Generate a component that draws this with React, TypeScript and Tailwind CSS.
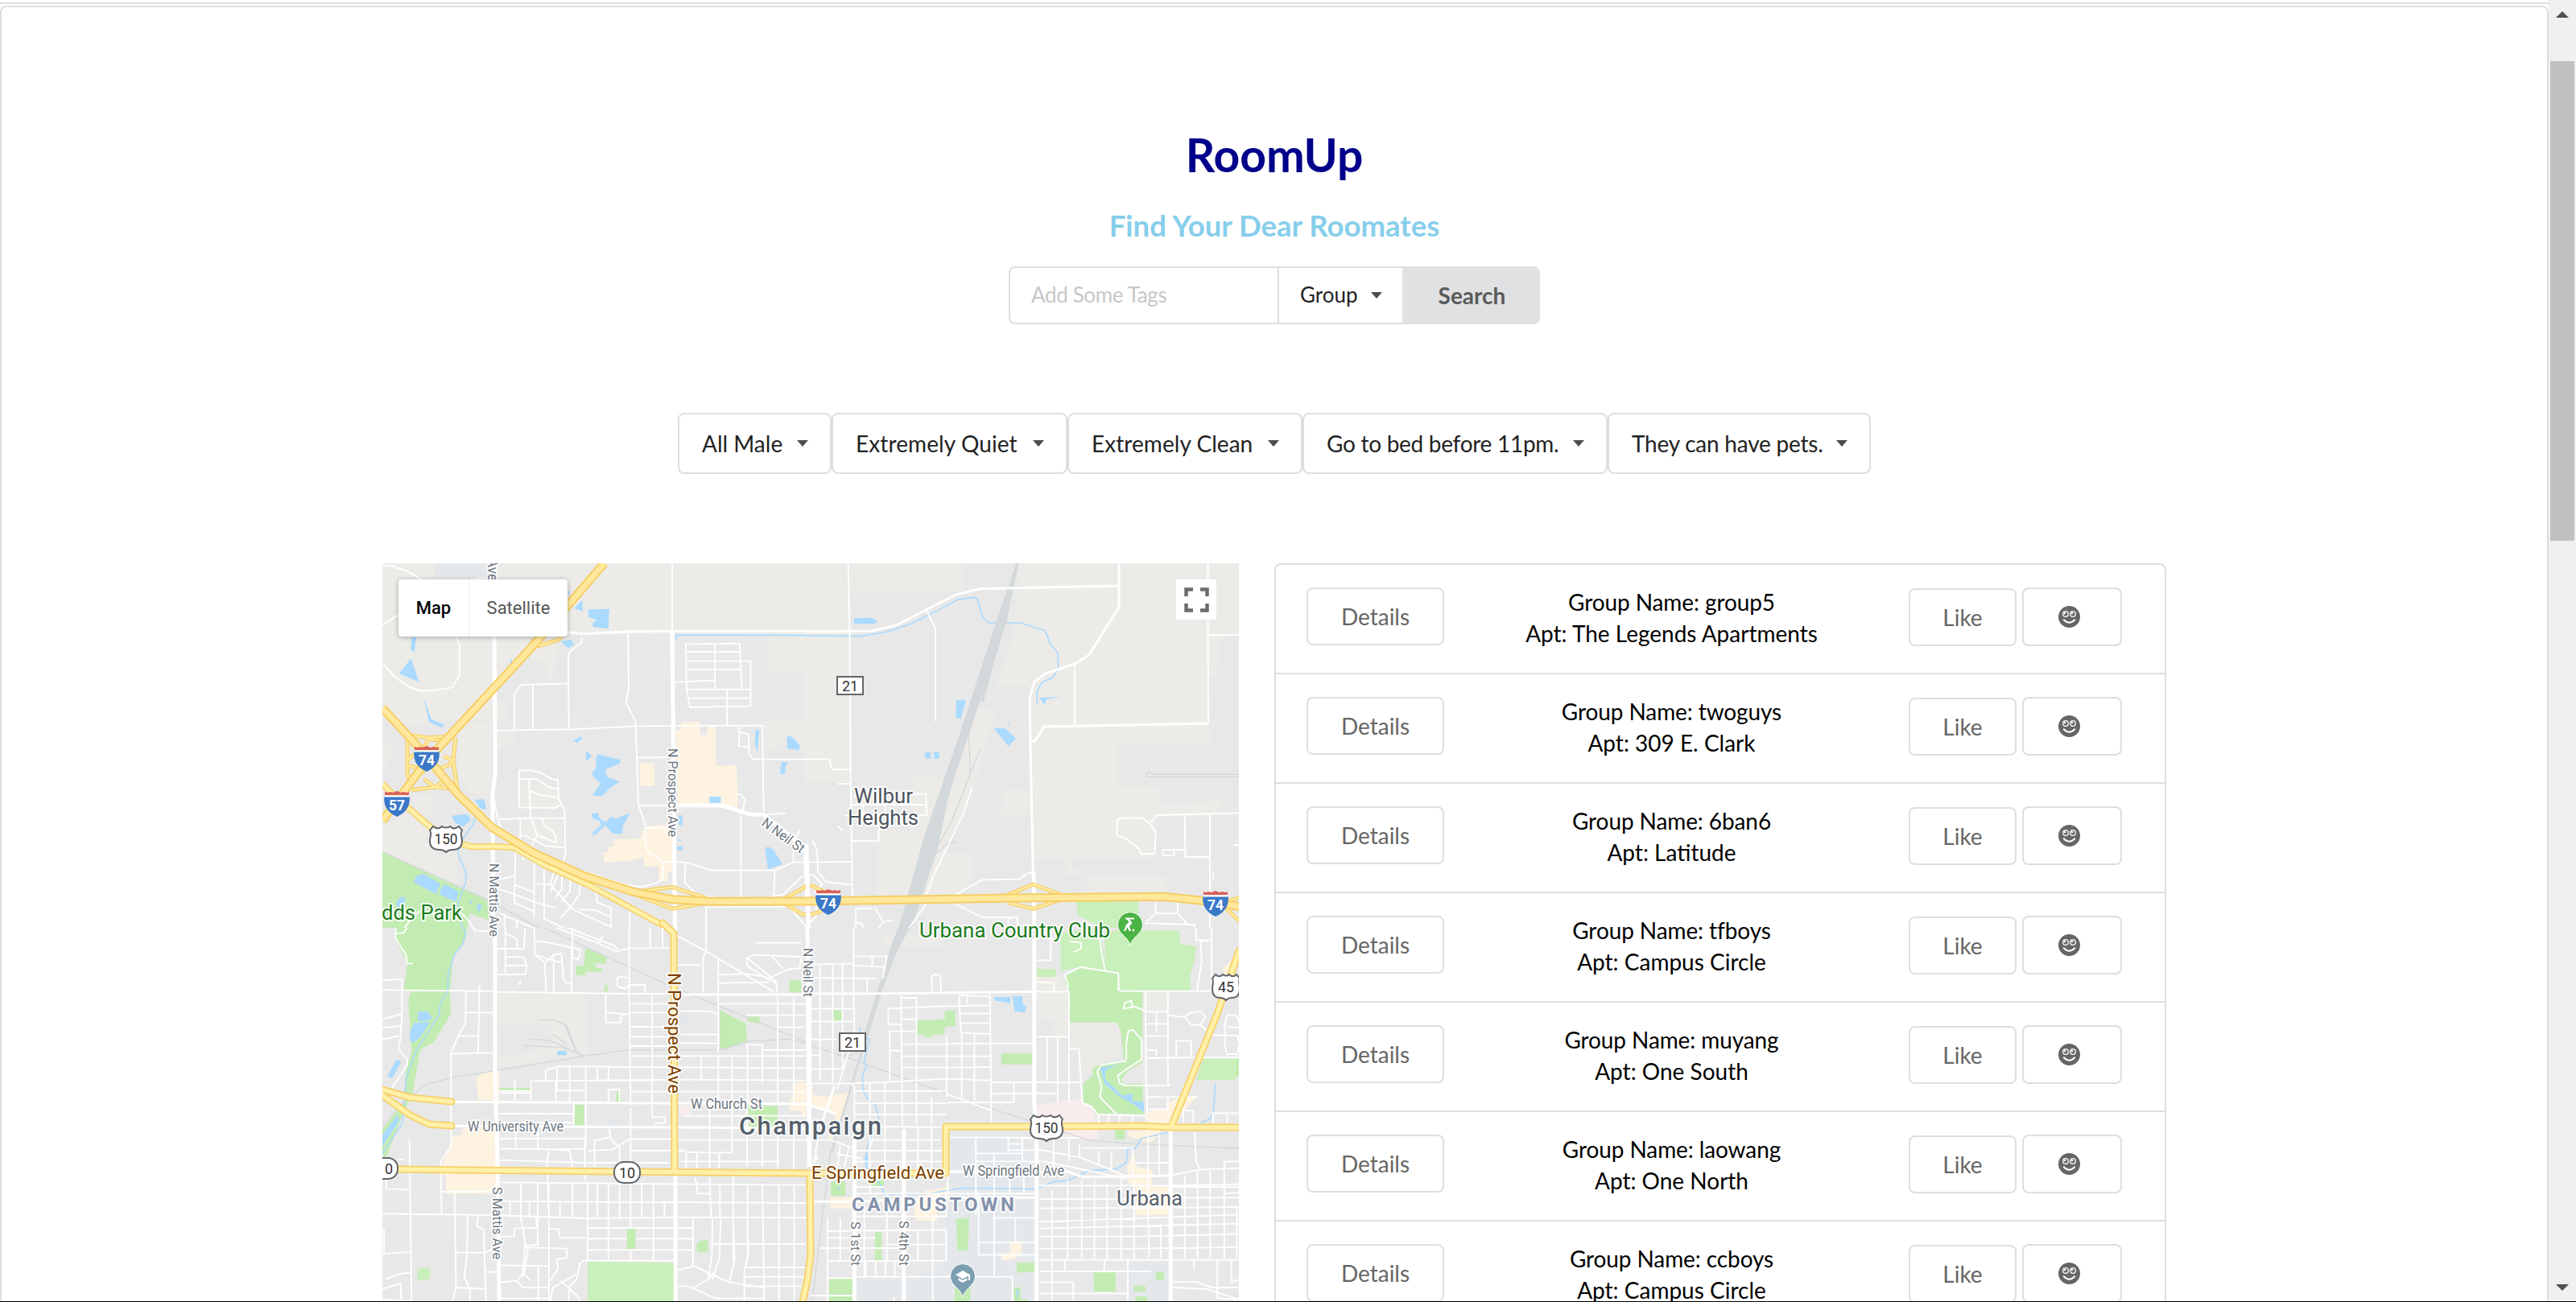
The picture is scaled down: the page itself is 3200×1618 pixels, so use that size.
import React from "react";

type Quad = {
  m: string;
  rural: string;
  campus?: string;
  sand: string;
  pink?: string;
  park: string;
  lightPark?: string;
  water: string;
  stream: string;
  rail: string;
  railWide?: string;
  minor: string;
  main: string;
  artery: string;
  ramp: string;
  road: string;
  highway: string;
};

const quads: Quad[] = [
  {
    m: "matrix(0.34439 0 0 0.33333 -5 -5)",
    rural:
      "M15 15H1568V280H735L685 270L560 300L430 470V600L280 600L110 620L15 540Z M15 680L68 720L15 780Z M550 320H645V370L620 460H610V380L550 378Z M1400 285H1568V600H1535V420H1403Z M1388 602H1568V830H1535V710L1435 680L1430 710H1390Z M430 530H463V600H430Z M430 642H490V690L430 700Z M290 610H410V870H330L290 800Z M15 990L100 950L290 1060L285 1210L15 1090Z M520 830L648 850V925H510Z M515 965L665 970L670 1080L590 1060L515 1030Z M130 880H195V950H130Z",
    campus: "M203 15H400V65H203Z",
    sand: "M1092 607H1158V622H1160V655H1187V622H1217V770L1292 768L1297 925L1240 915L1080 910L1072 640L1092 635Z M943 765Q945 758 952 759H990Q997 760 997 770V835Q996 845 985 845L950 846Q943 845 943 840Z M810 1092H830V1070H850V1045L945 1042L952 1012H970V995L1010 990H1060V1165H1045V1200H1012V1145H960L955 1110L900 1125L815 1130Z",
    park: "M15 1090L400 1270L398 1345L330 1320L320 1380H15Z",
    water:
      "M120 290H137L130 347L117 338Z M118 370L75 425L147 459Z M160 508L190 595L237 618L230 627L183 607Z M757 187L833 186L830 258L776 254L771 240L788 226L758 216Z M735 152L738 194L706 183Z M683 120L694 121L684 135Z M659 307L695 299L707 317L684 331Z M474 374H482V385L477 390Z M702 677L731 660L735 668L719 684Z M748 713L770 733L751 755Z M791 727L874 748L872 761L817 784L826 813L872 828L835 853L806 884L772 880L801 837L769 801L787 775L784 743Z M769 948L793 945L797 965L819 980L841 959L858 967L909 946L881 996L880 1024L845 1022L818 992L786 1024L772 1030L775 1016L805 990L799 978L770 963Z M1360 638L1374 635L1367 720L1358 690Z M1474 660L1490 661L1519 691V711L1475 706Z M1455 755L1476 757L1468 773L1467 801L1449 800Z M1194 885H1235V908H1194Z M1082 957L1098 953L1096 992L1083 990Z M1077 1072L1097 1068V1085H1077Z M1395 1077L1405 1071L1425 1082L1458 1137L1405 1155Z M264 956L320 950L335 970L307 997L275 980Z M348 896L382 895L389 933L366 928Z M137 1182L162 1172L224 1210L208 1248L127 1204Z M237 1210L291 1240L280 1277L218 1248Z M65 1280L80 1258L97 1262L90 1330L68 1300Z M355 1284L376 1290L360 1319Z M328 1275L342 1268L330 1290Z M1080 1043L1098 1050H1080Z",
    stream: "M350 960L340 990L290 1065L287 1100L315 1165L316 1200L285 1290L305 1380 M1072 300L1076 282L1568 284",
    rail: "M15 1090L410 1280L590 1380",
    minor:
      "M15 22L50 25L105 45L155 75 M15 245L75 205 M280 290L293 318V432L266 478L195 490L145 490L110 475L58 438L15 388 M115 480L160 490 M344 75L360 70H400 M735 290V308L690 345L685 355L687 632 M685 463L516 468L490 503V635 M557 468V635 M428 638L700 634L930 622L1385 620L1390 942 M901 278L903 485L893 533L928 605L938 915L963 990V1065L975 1092L1030 1128 M928 740L1050 738 M938 918H1060 M963 1002H1065 M1109 316L1303 314L1311 480 M1109 316L1112 485L1125 552L1343 547V380H1112 M1112 345H1303 M1112 412L1310 410 M1070 457L1213 452 M1214 314V482 M1112 485H1343 M1122 518H1343 M1257 485L1258 618 M1298 622L1303 643L1335 652L1338 725L1352 746H1568 M1303 643L1300 698L1335 699 M1060 15V265 M415 880L430 968L443 1000 M1385 952L1470 947 M508 925V786L555 788L585 795L625 820L648 822L650 892L672 938L675 1100L655 1160L622 1240 M510 820L568 818L620 852L648 856 M543 820L545 862L550 965L573 1028L550 1075L520 1120 M543 862L580 878L650 890 M508 925L640 927L660 915 M430 970L515 965L670 964 M512 965V1090 M512 1030L530 1032L560 1045L600 1068L670 1075 M590 967L600 995L625 1010L640 1030V1055 M573 1028L625 1050L640 1058 M495 1090L490 1280L560 1312 M437 1230L570 1280L640 1300 M495 1215L562 1242 M440 1192L465 1188L490 1180 M562 1120V1340 M598 1140V1340L680 1380 M565 1210L620 1212L700 1305L838 1370 M640 1145L620 1212 M662 1165V1230L640 1260 M695 1170L690 1240L660 1275 M727 1190L725 1250L690 1300L655 1340 M785 1240L790 1280L840 1300V1380 M725 1305L780 1308L840 1335 M455 1320V1380 M500 1345V1380 M437 1320L560 1375 M907 1310V1380 M1182 1380V1297L1480 1295L1548 1375 M1308 955V1270 M1108 1130L1105 1205L1150 1250L1220 1262 M1040 1128L1110 1130L1200 1160H1430L1497 1130H1568 M1430 1160L1425 1285 M1497 1130V1060L1520 1010 M1425 1255L1460 1250L1530 1180 M1030 1128L1025 1190L1010 1205L950 1222L880 1210L760 1170L700 1155 M1285 875L1307 877L1322 897L1315 940 M90 1380L120 1340L150 1310 M290 1310L320 1340L345 1380",
    main: "M660 270L740 278L900 270L1060 268H1568",
    artery: "M418 75V285L422 790L412 880L415 1380 M1060 268L1064 700L1070 1380 M1080 917L1240 918L1345 952H1390L1540 1080L1550 1380",
    ramp:
      "M100 655L180 665L265 660 M105 665V800L120 860 M120 860L200 850L285 855 M285 860L270 750L278 665 M110 745L125 730L150 735 M110 770L150 780L165 800 M165 820L205 850L235 825L220 795 M220 780L262 765V745L235 735 M165 705L180 670L220 675L225 700 M930 1240L1060 1222L1180 1262 M940 1255L1060 1303L1180 1282 M1450 1275L1568 1205 M1460 1280L1530 1325L1568 1322 M570 325L650 300L660 285 M560 300L550 320",
    road: "M15 838L60 885L190 1000L245 1030L300 1062L340 1072L420 1070L490 1075L600 1140L760 1215L1062 1385",
    highway:
      "M815 15L560 320L175 750L15 975 M15 555L140 695L290 880L410 1000L560 1095L740 1180L920 1240L1060 1268L1200 1276L1568 1275",
  },
  {
    m: "matrix(0.35077 0 0 0.33333 525 -5)",
    rural:
      "M0 15H555V120H160V830H0Z M760 15H1539V275L1465 305L1460 435L1433 440V690L1105 695V845L1255 850V912H1350L1475 900V945L1240 960L1245 1115H1433L1120 1120H925L808 1122L800 860H695L705 920L665 955L800 952L798 500L790 470L675 472L735 290Z M375 812H495L600 560H675L600 840L500 1090L430 1250H255V1010H375Z M475 1095H592V1200L550 1250H430Z M960 625H1105V845H960Z M925 1120V1180H1280V1250H1000V1190Z",
    sand: "",
    park: "",
    lightPark: "M960 1265L1180 1272V1380H1060L1000 1345L965 1325Z",
    water:
      "M174 220L236 218L257 230L248 240L174 241Z M536 525H570L552 595L533 590Z M828 516L910 514L855 522L850 543Z M669 631L708 630L747 668L720 697Z M426 720H445V743H426Z M457 717H475V743H457Z M714 614L722 612L726 622Z",
    stream: "M0 284L195 287L290 271L375 241L460 196L542 150L600 142L612 152L628 214L650 237H765L850 266L870 318L895 348L897 408L878 440L840 458L821 495L822 538",
    rail: "M580 640L585 800L515 990L450 1100 M620 706L585 800 M535 1055H510L450 1110L395 1260 M1210 810V797L1220 792L1230 802H1539 M1210 811H1539",
    railWide: "M748 15H756L715 225L665 400L610 560L530 810L505 900L470 1080L375 1380H330L420 1040L545 660L680 225Z M635 440L665 400L632 535L625 530Z",
    minor:
      "M153 15L158 270L162 840L168 1260 M430 190L462 258V604 M0 746H88L92 776L100 784H162 M115 838L160 836 M118 994L133 1012 M165 915H430 M205 915V955 M140 955H432 M428 875H320 M428 875L432 955 M352 915V875 M285 915V955 M262 1000L260 1051L168 1050 M592 853L560 950L455 1180L430 1250 M0 1130L165 1127 M28 1050L43 1085L46 1165L75 1203L165 1213 M0 1178H30L62 1212L40 1230 M535 1250L628 1195L757 1193L790 1170H808 M535 1287L628 1335H752V1380 M752 1335L720 1338V1380 M955 390V615 M1427 15V282L1428 612 M1427 282H1539 M1434 950V1380 M1104 1027L1107 970L1120 965H1195L1220 985L1242 1018L1238 1098H1190L1185 1082L1145 1047Z M1220 985L1247 954L1539 946 M1345 955L1347 1110H1433 M1345 1083H1267V1104H1307V1083 M1518 1065H1539 M1446 1165V1192 M1242 1280V1320L1205 1357L1380 1362V1380 M1320 1280V1320L1355 1362 M1242 1320H1320 M180 1380V1302H238 M248 1297L276 1352L315 1346 M276 1352L260 1375 M172 1356L200 1358L212 1380 M430 1285L365 1380 M0 1375L40 1330V1230",
    main:
      "M0 270L240 267L325 245L430 188L535 132L620 110L1111 99 M1112 15V178L1005 358L955 390L852 426L813 456L796 515L798 680L808 1180 M800 680L815 677L847 624L1427 612",
    artery: "M5 1060L13 1380 M810 1170L812 1380",
    ramp: "M18 1215L80 1245 M20 1325L50 1315L80 1290 M710 1255L808 1212L905 1250 M720 1280L808 1303L900 1270 M1480 1280L1539 1260 M1490 1300L1539 1350",
    road: "",
    highway: "M0 1275L420 1268L800 1262L1270 1258L1400 1272L1539 1295",
  },
  {
    m: "matrix(0.34439 0 0 0.33333 -5 450)",
    rural: "M432 250H748L755 480L432 530V495L540 475L630 440L620 365L432 372Z",
    campus: "M1085 325H1115V380H1085Z M1195 715H1270V740H1195Z M830 715H860V745H830Z",
    sand: "M355 570L385 543H437V650H360Z M265 785L300 780L305 755H437V940L435 1000H243V930H215L230 890L245 860Z M1500 585H1568V715H1530L1525 690H1485V645L1502 640Z",
    pink: "M1085 672H1127V705H1085Z",
    park:
      "M60 0H320L315 50L270 110L258 240L262 330L200 435L150 465L125 620L90 700L30 860H15V760L90 660L100 540L120 470L108 280L118 245H92L105 140L60 50Z M747 83L825 120L821 143L782 140L785 158L810 160L805 173L747 172V187H713V152L742 150Z M815 222H827V248H815Z M1231 315L1325 365L1330 430L1250 460H1231Z M1330 340L1377 340L1372 367L1330 357Z M1482 205H1525V250H1482Z M708 668H743V745H708Z M862 615H872L878 657H856Z M1335 673H1440V750H1335Z M436 606H547V615H436Z M897 1130H928L926 1207H897Z M1149 1190L1160 1175L1190 1174V1217H1149Z",
    lightPark: "M755 1253L1068 1258V1402H755Z M140 1285L155 1278H180L188 1290V1310L175 1325H150L140 1312Z",
    water:
      "M142 322L176 321L196 345L170 357L142 355Z M130 364L186 360L150 418L125 437L112 425L115 392Z M66 500L83 508L50 571L32 563Z M15 780L70 705L76 728L15 825Z M645 468H679V484H645Z",
    stream: "M305 0L314 30L304 70L274 110L252 180L250 245L222 295L220 330L135 470L100 570L98 640L85 740L15 850",
    rail: "M580 0L1040 220L1568 445 M15 750L90 660L170 595L260 568L430 540L760 485L900 465L1240 463L1345 430L1480 425L1568 445 M525 448L660 455L740 485 M545 425L615 428L690 460 M575 353H635L672 370L710 465L735 485 M628 404L680 445 M645 355L680 375L712 465",
    minor:
      "M15 240L100 242L415 245L425 248L905 255H1100 M62 0V48L100 110L103 142H125 M15 205L90 200 M85 205V325L80 420L72 460L105 500V520L50 605 M15 350L82 330 M15 382L80 375 M15 425L75 412 M108 0L92 28L60 30 M335 0L350 20L410 22 M316 245L314 365L288 412L262 475V825L225 880L228 1075 M365 220L360 475 M316 325H420 M288 412H360 M262 478L420 475 M112 798L120 1402 M15 1075L410 1080L755 1092L1140 1088L1568 1090 M28 940V982L115 985 M70 873H92 M228 993L435 992 M275 995L280 1350L268 1402 M322 1080L320 1230L310 1310L330 1355V1402 M280 1220H385L420 1205 M362 1080L355 1120L380 1135L388 1402 M280 1350L385 1355 M15 1225L115 1217 M25 1320L85 1297L118 1295 M15 1355L82 1335V1402 M15 1132H20V1220 M390 1292H435 M15 1395L120 1402 M458 0V180 M430 87H525L530 0 M460 30L500 50V85 M460 118H525L535 150L530 182L430 184 M460 150H530 M500 220L512 215V205 M562 0L565 110L600 138L605 245 M565 60L585 58L730 90L722 128L700 120V0 M565 110L660 140 M605 135L632 110L660 105 M660 105L668 200L678 215H695 M632 110V245 M697 85V250 M620 0L790 65L860 97L905 85 M660 0L800 55L850 75L865 90 M810 40L795 65 M905 0V260L910 670 M905 85H1050 M980 0V85 M1025 0V85 M1070 0V35L1180 95L1430 250 M1182 0V98L1172 120V250 M1080 148H1165 M1226 125V460 M1228 185L1320 180L1400 192 M1228 215L1410 212 M1440 250L1435 210L1330 120V150L1370 178L1440 220 M1330 120L1358 110L1525 117L1520 160L1480 163L1400 200 M1420 115L1460 160 M1360 65H1525 M862 228V195L880 190L900 197 M862 228L890 235L905 222L962 222V255 M820 255V362H875V335L890 335 M820 325L905 330 M910 292H1060 M910 325L1060 325 M910 378H1060 M910 415H1060 M910 450H1060 M988 260V660 M1090 320H1190L1226 330 M1090 407H1226 M1090 438L1226 440 M1226 292H1540 M1226 260V470 M1328 335H1540 M1330 460V445H1385V590 M1440 265V660 M1498 265V660 M1440 380H1540 M1385 465H1540 M910 487H1540 M1165 487V575 M1226 487V660 M1276 490V660 M1332 460V660 M550 580L1130 575L1540 578 M604 540L650 525L905 528L1540 532 M604 540V580 M550 580V660 M492 575V655 M640 580V660 M690 525V660 M748 525V830 M790 530V575 M830 530V575 M435 617H545 M440 625H550 M640 615H750 M830 612H870V657 M830 612V660 M910 620H1540 M645 525V620 M440 702H705 M440 735H705 M705 665V745 M910 680V870L905 940 M988 670V715H1035V735L995 740 M1100 710H1568 M1195 670V750 M1276 670V850 M1330 690V900 M1385 755V900 M1440 755V910 M1498 755V910 M440 795H745V950 M495 760V828 M440 832L620 835 L745 832 M575 755V830 M615 840L608 880L615 1090 M630 835L690 840 M690 835L700 905 M832 760L838 795L870 830V905 M838 790L780 802V900 M755 840L845 835L905 797H1090 M1090 800H1568 M910 840H1110 M1110 845L1230 848V910 M1090 880H1330 M1110 845V910 M1150 845V910 M1195 755V910 M1230 848L1276 845 M1330 880H1450 M440 875L600 880 L740 885H1050 M440 958L905 963L1140 965L1568 968 M514 960V1090L530 1180L520 1310 M575 960V1190L525 1195 M615 960V1402 M440 1028L900 1032L1130 1032L1568 1035 M655 1030V1088 M700 963V1088 M755 963V1250 M790 965V1088 M830 965V1250 M870 963V1088 M910 965V1130 M950 965V1088 M992 965V1250 M1032 1035V1088 M475 1030V1088 M545 1030V1088 M1140 940L1150 965V1000H1195 M1195 940L1200 1090 M1232 970V1090 M1280 910V1250 M1332 965V1250 M1385 965L1392 1402 M1445 965V1402 M1500 965V1402 M1205 1095L1203 1230L1190 1320 M1235 1090L1230 1240L1205 1320 M1280 1095L1285 1250L1265 1330 M1330 1105L1335 1220L1320 1290V1402 M490 1130L570 1128 M490 1130V1160H440 M570 1090V1130 M615 1130L650 1133L655 1165H750 M755 1128H1135 M755 1168H895 M755 1210H1135 M1135 1090V1270 M910 1210V1250 M440 1267L615 1270 M530 1200L680 1205V1240L645 1245L648 1280L620 1325 M520 1300L500 1325L440 1330 M500 1325L520 1350H610 M577 1270V1402 M1068 1250H740L728 1260L715 1320L685 1350L725 1390V1402 M655 1325L690 1352L685 1402 M715 1300L630 1350L620 1402 M540 1205L525 1300L550 1325 M435 1390H615 M930 1168H1135 M1140 1270L1200 1300L1265 1330L1390 1350 M1140 1270L1080 1285 M1080 1345H1120L1150 1360L1215 1390H1390 M1140 1350L1190 1320L1210 1295 M1325 1275H1540 M1320 1310H1540 M1320 1345H1530 M1203 1188H1540",
    main: "M270 658L905 662L1568 665 M270 748L1568 756 M1100 258H1568",
    artery: "M421 40V560L430 900L436 1402 M1070 0L1072 1402 M1548 0L1558 915",
    ramp: "",
    road: "",
    highway: "",
  },
  {
    m: "matrix(0.35077 0 0 0.33333 525 450)",
    rural:
      "M820 190H905L930 250L935 415H880V350H820Z M940 362H1107L1118 395V490L1040 515L985 580L970 465L940 460Z M1205 250H1285V320H1205Z M275 40H490V80H275Z",
    campus:
      "M515 790H790V850L820 900V1402H355V1325L500 1255V1080H515Z M180 1310H355V1402H180Z M1143 1250H1288V1402H1143Z",
    sand:
      "M0 585H28V630L75 640L155 622L140 690L100 790L85 798V755L110 740V710L60 690L0 670Z M1205 700L1240 685H1280V665L1330 640L1390 635L1350 680L1310 740H1285L1230 805H1205L1145 785V765H1205Z M1140 900L1165 850L1175 900L1230 912V970H1290V1080H1170V975L1145 960Z M90 1015H180V1055H90Z M400 1010L425 990L515 975V1000L465 1010L470 1100H395L385 1060Z M725 1185H768V1225L735 1245L700 1250L695 1230L730 1215Z M665 740H760V760H665Z M1475 165L1510 130V165L1490 185Z",
    pink: "M820 670L980 645L1020 690L1040 795H930L905 740H820Z",
    park:
      "M922 185L975 160L1108 180V240L1195 250V510L1140 545L1120 575L1130 590H1197V705L1100 700L1035 705L1015 675L985 665V590L1018 560V535L1050 515L1130 505L1118 395L1107 362H938V245L922 215Z M397 355L495 350V320L532 317V375L495 378V405L452 408V417H425L420 408L397 407Z M695 478H808V518H695Z M98 316H130V356H98Z M1098 760H1133V797H1098Z M92 955H143V1008H92Z M233 940H280V973H233Z M248 1142H271V1250H248Z M535 1095L582 1090L577 1212H540Z M750 1258H815V1290L750 1295Z M85 1317H172V1402H85Z M1023 1290H1100V1365H1023Z M1165 1343H1205V1365H1165Z M1170 1383H1212V1402H1170Z M1240 1295L1272 1290V1320L1245 1325Z M740 1348L762 1350L765 1395H790V1402H740Z M530 1350H585V1402H530Z M1525 495H1539V565H1525Z",
    lightPark:
      "M1060 20L1325 18L1330 70L1385 77L1380 130L1365 180V245H1118L1110 175L1065 170Z M905 30L1040 0L1070 170L975 155L905 170Z M1410 497H1525V575L1385 578Z M820 162H888V192H820Z",
    water:
      "M668 267H727V290L700 285L673 280Z M735 265L770 263L772 295L783 302L780 325L742 320Z M1046 530L1110 520L1065 540L1063 575L1125 635L1160 628L1158 655L1200 657V695L1160 665L1110 635L1060 590Z M114 978L128 975L122 990Z M210 870L217 845L225 880L216 905Z M748 1360L757 1358L753 1400Z",
    stream:
      "M193 380L197 415L228 424L208 510L218 525L203 560L207 620L225 650L250 670L262 725 M245 765L220 830L217 900L255 950L272 975L280 1003L430 1002L545 980L640 980L820 983L880 955L930 952L1005 915L1105 907L1138 885L1143 835L1172 830L1190 795L1285 772 M1453 590L1447 690L1435 720L1400 738",
    rail: "M0 443L130 485L560 650L800 730L1010 802L1180 815L1539 832 M115 485H160L190 470 M1495 828H1539 M265 250L190 500L90 850L60 1100L25 1402 M270 250L195 500L95 850",
    railWide: "M335 0H375L320 110L270 250L215 420H205L255 250L310 60Z",
    minor:
      "M20 130V900 M0 310H170 M0 358H170 M53 145V580 M98 145V590 M133 145V540 M20 145L170 142 M0 195L250 198 M170 115H290L275 200 M170 150L285 155 M238 115V152 M220 200V245 M0 425L115 425 M20 485H50 M20 535H140 M155 470L115 610 M172 0V250L175 400V420 M450 245L448 190L463 180L480 190L482 245 M0 590H140L270 585L500 572L660 578 M160 590L175 600V1402 M230 590V1000 M283 585V930 M340 260L345 745 M175 618H500 M175 663H500 M175 705H500 M175 750L490 752 M395 265V740 M448 640V740 M340 270H395 M295 310L460 302L655 298 M295 310V368L340 370 M340 350H395 M295 395H390 M300 395V580 M300 467H340 M545 265L552 400L655 405 M545 260L655 265 M575 260V295 M545 328H655 M550 365H655 M555 400V655 M600 405V655 M655 255L660 740 M345 443L655 440H808 M340 488H655 M345 530H555L655 528 M502 410V640 M505 630L560 650L660 690 M505 660H740V590 M660 585H980 M660 628L895 625 M822 415L935 415 M858 418V580 M895 418V660 M935 250V580 M970 460L982 660 M935 460H970 M935 580V660 M820 130H870L872 0 M820 210L882 215V245 M820 247H930V215L920 185L975 155L1110 178V240L1118 245H1539 M1063 170L1050 100L1045 60L1030 20 M950 100L978 85V65L940 60 M1385 0V55H1440L1400 60L1405 130L1388 245 M1440 0V245 M1205 250L1208 600 M1245 325V400 M1285 250V590L1295 600 M1205 322H1285 M1205 367H1285 M1208 412H1285 M1128 310L1132 290L1155 280L1160 305ZM1160 300L1208 320 M1285 335L1345 342L1365 325L1400 320L1418 340L1400 372L1368 370L1345 342 M1400 372L1420 390 M1440 410H1490L1485 435L1495 480H1530L1539 440L1530 410H1490L1485 380L1495 335H1525L1539 360 M1495 380H1539 M1315 490V430H1368V490 M1208 495L1380 492H1539 M1210 465H1245V490 M1138 500V440L1145 395L1160 388L1192 425V500L1140 535L1108 560L1115 590L1135 597H1290 M1138 505L1050 520L1035 545L1050 600L1045 640L1100 700 M1212 640H1390 M1210 685H1285V640 M1210 600L1212 705 M980 660L1015 675L1037 705L1205 710 M1040 705V735 M1075 705V735 M1115 705V735 M1160 705V735 M1340 665V735 M1440 700H1539 M1445 700V735 M1495 700V735 M1345 690H1375V735 M1380 770L1385 880L1400 910 M1300 930L1400 910L1539 905 M0 800H90L170 830 M45 800L30 900 M35 840L45 870L30 870 M110 850L200 870 M125 820L115 900 M155 830L140 900 M175 880H490 M235 800H480 M175 840H490 M240 790L230 830 M400 755V920 M448 755V920 M515 790L970 792 M605 790V1080 M605 850H770 M720 790V850 M770 790V880 M605 880L850 880L1140 945 M670 850V1000 M720 838L840 838L975 865L1140 935 M725 815H770 M880 800V900 M935 795V880 M972 815V860 M980 830H1160V940 M1040 840V890 M1085 845V910 M1170 885H1290 M1215 780V1110 M1255 780V930 M1485 880H1539 M1485 880V1000L1539 995 M830 970H1290L1539 965 M830 1020H1160 M830 1055L1539 1050 M830 1105L1539 1078 M830 1130L1539 1112 M830 1160H1165L1539 1150 M830 1205H1170L1539 1200 M875 985V1402 M930 950V1245 M980 950V1245 M1025 950V1245 M1070 960V1245 M1120 940V1245 M1165 940V1245 M1218 1110V1240 M1260 1110V1240 M1345 935V1240 M1390 915V1240 M1435 915V1240 M1485 915V1240 M1530 1050V1240 M1300 975H1539 M1300 1015H1539 M830 1247H1539 M920 1247V1290H1225 M1060 1250V1290 M1143 1250V1402 M830 1290H1000 M830 1330H950V1402 M830 1372H1140 M1300 1330L1380 1328L1440 1350H1539 M1300 1350L1420 1355L1539 1395 M1378 1250V1285 M1460 1250V1390L1539 1395 M1510 1250V1330L1539 1320 M180 975H280 M180 1000H820 M180 1085H500V1000 M80 1090V1400 M55 1203H345 M80 1140L500 1135V1250H345 M80 1250L345 1252 M85 1165H248 M125 1090V1250 M210 1050V1310 M290 1000V1250 M400 1140V1250 M452 1090V1402 M180 1310H340 M215 1250V1310 M250 1250V1310 M285 1250V1310 M318 1250V1310 M80 1315H180 M20 1380H180 M355 1310H735V1402 M315 1385V1402 M290 1190H500 M615 1000V1228H815 M615 1182H815 M670 1000V1305 M745 1090V1182 M670 1090H815 M775 920V1005 M725 920V1000 M505 870V1000",
    main: "M20 1030H180L500 1015L820 1015 M20 255L280 254L808 247 M505 918L720 918L850 920L920 915L985 938L1290 933 M105 598L60 735 M0 665L110 700",
    artery: "M8 0L15 900 M812 50V660L820 800V1402 M1295 765V1402 M350 760V1402 M175 800V1402",
    ramp: "",
    road: "",
    highway: "",
  },
];

const layers: { key: keyof Quad; stroke?: string; fill?: string; w?: number }[] = [
  { key: "rural", fill: "#ecebe7" },
  { key: "campus", fill: "#e4e8eb" },
  { key: "pink", fill: "#f9ecec" },
  { key: "sand", fill: "#fdf3e0" },
  { key: "lightPark", fill: "#c9efba" },
  { key: "park", fill: "#c3ecb2" },
  { key: "water", fill: "#aadaff" },
  { key: "stream", stroke: "#aadaff", w: 1.6 },
  { key: "rail", stroke: "#d3d6d9", w: 1.3 },
  { key: "railWide", fill: "#d3d8db" },
  { key: "minor", stroke: "#ffffff", w: 1.9 },
  { key: "main", stroke: "#ffffff", w: 3 },
  { key: "artery", stroke: "#ffffff", w: 5 },
  { key: "ramp", stroke: "#f6d068", w: 5 },
  { key: "ramp", stroke: "#ffeba3", w: 2.4 },
  { key: "road", stroke: "#f6d068", w: 8 },
  { key: "road", stroke: "#fff0a8", w: 5 },
  { key: "highway", stroke: "#f6ce64", w: 11 },
  { key: "highway", stroke: "#ffe89c", w: 7 },
];

const yellowRoads =
  "M0 654L35 664L86 669 M0 661L35 686L58 697L86 699 M20 753L300 756L531 758L532 860L528 890L522 918 M348 447L362 460L363 757 M531 758H700V700L830 700L940 699L982 701H1064 M980 700L1037 560L1064 482";

function Label(p: {
  t: string; x: number; y: number; w: number; s: number; c: string;
  rot?: number; weight?: number; ls?: number;
}) {
  return (
    <text
      x={p.x}
      y={p.y}
      fill={p.c}
      fontSize={p.s}
      fontWeight={p.weight ?? 400}
      textLength={p.w}
      lengthAdjust={p.ls ? "spacing" : "spacingAndGlyphs"}
      letterSpacing={p.ls}
      transform={p.rot ? `rotate(${p.rot} ${p.x} ${p.y})` : undefined}
      stroke="#ffffff"
      strokeOpacity={0.85}
      strokeWidth={4}
      strokeLinejoin="round"
      paintOrder="stroke"
    >
      {p.t}
    </text>
  );
}

function Interstate({ x, y, n }: { x: number; y: number; n: string }) {
  return (
    <g transform={`translate(${x} ${y})`}>
      <path d="M-15 5L-15 1L-12 2L-8 1L-5 2L0 0L5 2L8 1L12 2L15 1V5Z" fill="#d9605a" />
      <path d="M-15.5 6H15.5C17 17 13 26 0 32C-13 26 -17 17 -15.5 6Z" fill="#3a78c9" />
      <path d="M-15.5 6.5H15.5" stroke="#fff" strokeWidth="2" />
      <text x="0" y="24" fill="#fff" fontSize="18" fontWeight="700" textAnchor="middle" textLength="20" lengthAdjust="spacingAndGlyphs">{n}</text>
    </g>
  );
}

function UsRoute({ x, y, n }: { x: number; y: number; n: string }) {
  const wide = n.length > 2;
  const d = wide
    ? "M-16 1C-12 4 -8 4 -5 1C-3 3 3 3 5 1C8 4 12 4 16 1L20 6C17 10 20 14 20 19C20 27 15 30 8 30C4 30 2 31 0 33C-2 31 -4 30 -8 30C-15 30 -20 27 -20 19C-20 14 -17 10 -20 6Z"
    : "M-13 1C-10 4 -7 4 -4 1C-2 3 2 3 4 1C7 4 10 4 13 1L17 6C15 10 17 14 17 19C17 27 13 30 7 30C4 30 2 31 0 33C-2 31 -4 30 -7 30C-13 30 -17 27 -17 19C-17 14 -15 10 -17 6Z";
  return (
    <g transform={`translate(${x} ${y})`}>
      <path d={d} fill="#fff" stroke="#63676b" strokeWidth="2" />
      <text x="0" y="23" fill="#333" fontSize="18" textAnchor="middle" textLength={wide ? 29 : 20} lengthAdjust="spacingAndGlyphs">{n}</text>
    </g>
  );
}

function CountyRoute({ x, y }: { x: number; y: number }) {
  return (
    <g transform={`translate(${x} ${y})`}>
      <rect x="1" y="1" width="32" height="22" fill="#fff" stroke="#666" strokeWidth="2" />
      <text x="17" y="18.5" fill="#333" fontSize="18" textAnchor="middle">21</text>
    </g>
  );
}

function StateRoute({ x, y }: { x: number; y: number }) {
  return (
    <g transform={`translate(${x} ${y})`}>
      <rect x="-16" y="-13" width="32" height="26" rx="12" fill="#fff" stroke="#63676b" strokeWidth="2" />
      <text x="0" y="6.5" fill="#333" fontSize="18" textAnchor="middle">10</text>
    </g>
  );
}

const GREY = "#6b7680";
const BROWN = "#7b3f00";

function MapCanvas() {
  return (
    <svg width="1064" height="917" viewBox="0 0 1064 917" className="block" fontFamily="Roboto, sans-serif">
      <defs>
        {quads.map((q, i) => (
          <clipPath key={i} id={`tile${i}`}>
            <rect x={i % 2 ? 526 : 0} y={i < 2 ? 0 : 453} width={i % 2 ? 538 : 526} height={i < 2 ? 453 : 464} />
          </clipPath>
        ))}
      </defs>
      <rect width="1064" height="917" fill="#e8e8e8" />
      {layers.map((l, li) => (
        <g key={li}>
          {quads.map((q, i) => (
            <g key={i} clipPath={`url(#tile${i})`}>
              <g transform={q.m}>
                <path
                  d={q[l.key] || ""}
                  fill={l.fill ?? "none"}
                  stroke={l.stroke ?? "none"}
                  strokeWidth={l.w}
                  strokeLinejoin="round"
                  vectorEffect="non-scaling-stroke"
                />
              </g>
            </g>
          ))}
        </g>
      ))}
      <path d={yellowRoads} fill="none" stroke="#f6d068" strokeWidth="9" strokeLinecap="round" strokeLinejoin="round" />
      <path d={yellowRoads} fill="none" stroke="#fff0a8" strokeWidth="5.5" strokeLinecap="round" strokeLinejoin="round" />

      <Label t="Ave" x={131} y={-6} w={28} s={18} c={GREY} rot={90} />
      <Label t="N Prospect Ave" x={355} y={230} w={110} s={17} c={GREY} rot={90} />
      <Label t="N Mattis Ave" x={133} y={373} w={91} s={17} c={GREY} rot={90} />
      <Label t="N Neil St" x={470} y={325} w={61} s={17} c={GREY} rot={36} />
      <Label t="dds Park" x={-1} y={443} w={100} s={26} c="#1c7d1c" />
      <Label t="Wilbur" x={586} y={298} w={73} s={25} c="#4c545e" />
      <Label t="Heights" x={578} y={325} w={88} s={25} c="#4c545e" />
      <Label t="Urbana Country Club" x={667} y={465} w={237} s={26} c="#1c7d1c" />
      <Label t="N Neil St" x={523} y={478} w={61} s={17} c={GREY} rot={90} />
      <Label t="N Prospect Ave" x={355} y={509} w={150} s={22} c={BROWN} rot={90} />
      <Label t="W Church St" x={383} y={678} w={89} s={18} c={GREY} />
      <Label t="W University Ave" x={106} y={706} w={119} s={18} c={GREY} />
      <Label t="Champaign" x={443} y={710} w={178} s={31} c="#55606b" weight={500} ls={1} />
      <Label t="E Springfield Ave" x={533} y={765} w={165} s={22} c={BROWN} />
      <Label t="W Springfield Ave" x={721} y={761} w={126} s={18} c={GREY} />
      <Label t="CAMPUSTOWN" x={583} y={805} w={205} s={24} c="#8391ab" weight={700} ls={3} />
      <Label t="Urbana" x={912} y={798} w={82} s={26} c="#55606b" />
      <Label t="S 1st St" x={582} y={818} w={55} s={17} c={GREY} rot={90} />
      <Label t="S 4th St" x={642} y={817} w={56} s={17} c={GREY} rot={90} />
      <Label t="S Mattis Ave" x={137} y={775} w={90} s={17} c={GREY} rot={90} />

      <Interstate x={55} y={227} n="74" />
      <Interstate x={18} y={283} n="57" />
      <Interstate x={554} y={405} n="74" />
      <Interstate x={1035} y={407} n="74" />
      <UsRoute x={79} y={326} n="150" />
      <UsRoute x={825} y={685} n="150" />
      <UsRoute x={1048} y={510} n="45" />
      <CountyRoute x={564} y={140} />
      <CountyRoute x={567} y={583} />
      <StateRoute x={304} y={757} />
      <StateRoute x={3} y={752} />

      <g transform="translate(929 449)">
        <path d="M0 26C-3 14 -15.5 12 -15.5 0A15.5 15.5 0 0 1 15.5 0C15.5 12 3 14 0 26Z" fill="#4cb345" stroke="#fff" strokeWidth="1" />
        <path d="M-6 -8.5H5V-6.5H-1L2.5 -2L-1 2L1 8H-1.5L-3.5 3L-6 8H-8L-5 0L-1.5 -3L-4 -6.5H-6Z" fill="#fff" />
        <circle cx="4" cy="7" r="1.4" fill="#fff" />
      </g>
      <g transform="translate(721 886)">
        <path d="M0 26C-3 14 -15.5 12 -15.5 0A15.5 15.5 0 0 1 15.5 0C15.5 12 3 14 0 26Z" fill="#7b9eb0" stroke="#fff" strokeWidth="1" />
        <path d="M-9 -2L0 -7L9 -2V5H7V-.5L0 3.5Z M-5.5 2V5L0 8L5.5 5V2L0 5Z" fill="#fff" />
      </g>
    </svg>
  );
}

function Caret() {
  return (
    <svg width="14" height="8" viewBox="0 0 14 8" className="block shrink-0">
      <path d="M0 0H14L7 8Z" fill="#4d4d4d" />
    </svg>
  );
}

function Smile() {
  return (
    <svg width="27" height="27" viewBox="0 0 27 27" className="block">
      <circle cx="13.5" cy="13.5" r="13.5" fill="#666" />
      <g fill="none" stroke="#fff">
        <circle cx="9" cy="10" r="3.3" strokeWidth="1.3" />
        <circle cx="18" cy="10" r="3.3" strokeWidth="1.3" />
        <path d="M6.8 17.2Q13.5 24.2 20.2 17.2" strokeWidth="2" strokeLinecap="round" />
      </g>
      <circle cx="8" cy="9" r="1.3" fill="#fff" />
      <circle cx="17" cy="9" r="1.3" fill="#fff" />
    </svg>
  );
}

const filters = [
  { label: "All Male", width: "w-[191px]", track: "tracking-normal" },
  { label: "Extremely Quiet", width: "w-[293px]", track: "tracking-[0.1px]" },
  { label: "Extremely Clean", width: "w-[292px]", track: "tracking-[0.05px]" },
  { label: "Go to bed before 11pm.", width: "w-[379px]", track: "tracking-[-0.28px]" },
  { label: "They can have pets.", width: "w-[327px]", track: "tracking-[-0.22px]" },
];

const groups = [
  { name: "group5", apt: "The Legends Apartments" },
  { name: "twoguys", apt: "309 E. Clark" },
  { name: "6ban6", apt: "Latitude" },
  { name: "tfboys", apt: "Campus Circle" },
  { name: "muyang", apt: "One South" },
  { name: "laowang", apt: "One North" },
  { name: "ccboys", apt: "Campus Circle" },
];

function GroupRow({ name, apt }: { name: string; apt: string }) {
  return (
    <div className="flex h-[136px] shrink-0 items-start border-b-2 border-[#dedede] pl-[38px]">
      <button className="mt-7 h-[72px] w-[171px] rounded-lg border-2 border-[#dedede] text-[#666]">Details</button>
      <div className="mt-[27px] w-[577px] pr-3 text-center leading-[39px] text-black">
        <div className="tracking-[-0.1px]">Group Name: {name}</div>
        <div>Apt: {apt}</div>
      </div>
      <button className="mt-[29px] h-[72px] w-[134px] rounded-lg border-2 border-[#dedede] text-[#666]">Like</button>
      <button className="mt-7 ml-[7px] flex h-[73px] w-[124px] items-center justify-center rounded-lg border-2 border-[#dedede] pr-[7px] pb-px">
        <Smile />
      </button>
    </div>
  );
}

export default function App() {
  return (
    <div className="flex h-[1618px] w-[3200px] flex-col overflow-hidden bg-white font-[Lato,sans-serif] text-[28px] leading-[40px]">
      <div className="flex h-[1617px]">
        <div className="flex w-[3166px] flex-col overflow-hidden pt-[3px]">
          <div className="h-[2px] shrink-0 bg-[#dedede]" />
          <main className="mt-[2px] flex h-[1700px] shrink-0 flex-col items-center rounded-t-lg border-2 border-[#dedede]">
            <h1 className="mt-[147px] text-[57px] leading-[72px] font-bold text-[#00008b]">RoomUp</h1>
            <h2 className="mt-[29px] text-[36.5px] leading-[46px] font-bold text-[#87ceeb]">Find Your Dear Roomates</h2>
            <div className="mt-[28px] flex h-[72px] w-[660px]">
              <div className="flex w-[334px] items-center rounded-l-lg border-2 border-r-0 border-[#dedede] pb-0.5 pl-[26px] text-[26px] tracking-[-0.35px] text-[#c7c7c7]">
                Add Some Tags
              </div>
              <div className="flex w-[155px] items-center justify-between border-2 border-r-0 border-[#dedede] pr-[25px] pl-[26px] text-[26px] text-[#222]">
                <span className="pb-0.5">Group</span>
                <Caret />
              </div>
              <button className="flex-1 rounded-r-lg bg-[#e0e1e2] pl-0.5 font-bold text-[#5a5b5b]">Search</button>
            </div>

            <div className="mt-[110px] flex">
              {filters.map((f) => (
                <div key={f.label} className={`${f.width} flex h-[76px] items-center justify-between rounded-lg border-2 border-[#dedede] pr-[27px] pl-7 text-[#222]`}>
                  <span className={`${f.track} whitespace-nowrap`}>{f.label}</span>
                  <Caret />
                </div>
              ))}
            </div>

            <div className="mt-[111px] flex w-[2216px] gap-[44px]">
              <div className="relative h-[930px] w-[1064px] shrink-0 overflow-hidden">
                <MapCanvas />
                <div className="absolute top-5 left-5 flex h-[71px] rounded-[4px] bg-white font-[Roboto,sans-serif] text-[22px] leading-[71px] shadow-[0_1px_6px_rgba(0,0,0,0.3)]">
                  <div className="w-[88px] border-r border-[#ececec] text-center font-medium text-black">Map</div>
                  <div className="w-[122px] text-center text-[#565656]">Satellite</div>
                </div>
                <div className="absolute top-5 right-7 flex size-[50px] items-center justify-center bg-white">
                  <svg width="31" height="31" viewBox="0 0 31 31" className="block">
                    <path d="M2.5 11V2.5H11 M20 2.5H28.500V11 M28.500 20V28.500H20 M11 28.500H2.500V20" fill="none" stroke="#6c6c6c" strokeWidth="4.5" />
                  </svg>
                </div>
              </div>
              <div className="flex h-[930px] w-[1108px] shrink-0 flex-col overflow-hidden rounded-t-lg border-2 border-[#dedede]">
                {groups.map((g) => (
                  <GroupRow key={g.name} {...g} />
                ))}
              </div>
            </div>
          </main>
        </div>

        <aside className="flex w-[34px] flex-col items-center bg-[#f0f0f0]">
          <svg width="16" height="8" viewBox="0 0 16 8" className="mt-[14px] block">
            <path d="M0 8H16L8 0Z" fill="#505050" />
          </svg>
          <div className="mt-[54px] h-[596px] w-[30px] bg-[#c1c1c1]" />
          <svg width="16" height="8" viewBox="0 0 16 8" className="mt-auto mb-[13px] block">
            <path d="M0 0H16L8 8Z" fill="#505050" />
          </svg>
        </aside>
      </div>
      <div className="h-px bg-black" />
    </div>
  );
}
